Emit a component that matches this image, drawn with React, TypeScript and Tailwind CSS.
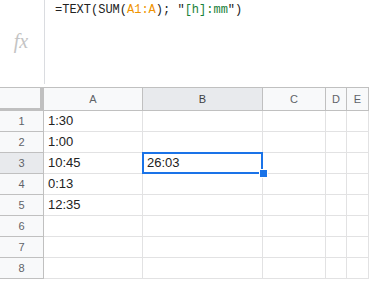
import React from 'react'

const cols = [
  { label: 'A', w: 'w-[99px]' },
  { label: 'B', w: 'w-[120px]' },
  { label: 'C', w: 'w-[63px]' },
  { label: 'D', w: 'w-[21px]' },
  { label: 'E', w: 'w-[22px]' },
]

const data: Record<number, string> = { 1: '1:30', 2: '1:00', 3: '10:45', 4: '0:13', 5: '12:35' }

const App = () => {
  return (
    <main className='w-[369px] h-[283px] overflow-hidden bg-white' style={{ fontFamily: '"Liberation Sans", Arial, sans-serif' }}>
      <div className='flex h-[84px]'>
        <div className='w-[45px] shrink-0 border-r border-[#dadce0] flex items-center justify-center'>
          <span className='text-[20px] italic text-[#c4c4c4] pr-[2px] pb-[2px]' style={{ fontFamily: '"Liberation Serif", serif' }}>fx</span>
        </div>
        <div className='pl-[10px] pt-[2px] text-[12px] leading-4 text-[#222]' style={{ fontFamily: '"Liberation Mono", monospace' }}>
          =TEXT(SUM(<span className='text-[#f09300]'>A1:A</span>); "<span className='text-[#188038]'>[h]:mm</span>")
        </div>
      </div>
      <div className='h-[3px]' />
      <div className='flex h-[24px] border-t border-[#c0c0c0] bg-[#f8f9fa] text-[11px] text-[#5f6368]'>
        <div className='w-[44px] shrink-0 border-r-[4px] border-b-[3px] border-[#c0c0c0] bg-[#f8f9fa]' />
        {cols.map(c => (
          <div key={c.label} className={`${c.w} shrink-0 border-r border-b border-[#c0c0c0] flex items-center justify-center ${c.label === 'B' ? 'bg-[#e8eaed] text-[#3c4043]' : ''}`}>
            {c.label}
          </div>
        ))}
      </div>
      {[1, 2, 3, 4, 5, 6, 7, 8].map(r => (
        <div key={r} className='flex h-[21px]'>
          <div className={`w-[44px] shrink-0 border-r border-b border-[#c0c0c0] flex items-center justify-center text-[11px] text-[#5f6368] ${r === 3 ? 'bg-[#e8eaed]' : 'bg-[#f8f9fa]'}`}>
            {r}
          </div>
          <div className='w-[99px] shrink-0 border-r border-b border-[#e2e2e3] px-[4px] flex items-end pb-[1px] text-[13px] text-[#222]'>
            {data[r]}
          </div>
          <div className='relative w-[120px] shrink-0 border-r border-b border-[#e2e2e3] px-[4px] flex items-end pb-[1px] text-[13px] text-[#222]'>
            {r === 3 && (
              <>
                <span>26:03</span>
                <div className='absolute z-10 left-[-1px] top-[-1px] w-[121px] h-[22px] border-2 border-[#1a73e8]' />
                <div className='absolute z-20 left-[117px] top-[17px] w-[7px] h-[7px] bg-[#1a73e8] outline outline-1 outline-white' />
              </>
            )}
          </div>
          <div className='w-[63px] shrink-0 border-r border-b border-[#e2e2e3]' />
          <div className='w-[21px] shrink-0 border-r border-b border-[#e2e2e3]' />
          <div className='w-[22px] shrink-0 border-r border-b border-[#e2e2e3]' />
        </div>
      ))}
    </main>
  )
}

export default App
